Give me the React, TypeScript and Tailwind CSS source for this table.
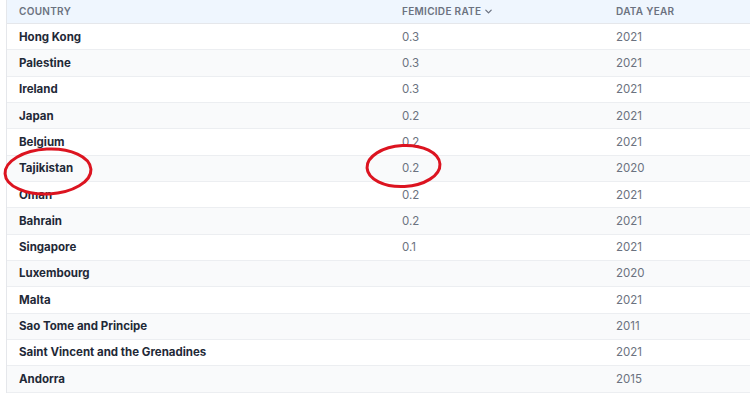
import React from "react";

const rows: [string, string, string][] = [
  ["Hong Kong", "0.3", "2021"],
  ["Palestine", "0.3", "2021"],
  ["Ireland", "0.3", "2021"],
  ["Japan", "0.2", "2021"],
  ["Belgium", "0.2", "2021"],
  ["Tajikistan", "0.2", "2020"],
  ["Oman", "0.2", "2021"],
  ["Bahrain", "0.2", "2021"],
  ["Singapore", "0.1", "2021"],
  ["Luxembourg", "", "2020"],
  ["Malta", "", "2021"],
  ["Sao Tome and Principe", "", "2011"],
  ["Saint Vincent and the Grenadines", "", "2021"],
  ["Andorra", "", "2015"],
];

export default function App() {
  return (
    <div
      className="relative w-[750px] h-[395px] overflow-hidden bg-white"
      style={{ fontFamily: "Inter, 'Noto Sans', sans-serif" }}
    >
      <div className="ml-[6px] w-[800px] border-l border-[#e5e7eb]">
        <div className="grid grid-cols-[383px_214px_1fr] h-[24px] items-center bg-[#eff6fe] border-b border-[#e5e7eb] text-[10px] font-semibold tracking-[0.03em] text-[#6b7280] uppercase">
          <div className="pl-[12px]">Country</div>
          <div className="pl-[12px] flex items-center gap-[3px]">
            Femicide Rate
            <svg width="9" height="9" viewBox="0 0 10 10" fill="none" stroke="#6b7280" strokeWidth="1.4" strokeLinecap="round" strokeLinejoin="round">
              <path d="M2 3.5 L5 6.5 L8 3.5" />
            </svg>
          </div>
          <div className="pl-[12px]">Data Year</div>
        </div>
        {rows.map((r, i) => (
          <div
            key={r[0]}
            className={
              "grid grid-cols-[383px_214px_1fr] h-[26.33px] items-center border-b border-[#eceef1] text-[11.5px] " +
              (i % 2 === 1 ? "bg-[#f9fafb]" : "bg-white")
            }
          >
            <div className="pl-[12px] pt-[1px] font-bold text-[#1f2937]">{r[0]}</div>
            <div className="pl-[12px] pt-[1px] text-[#6b7280]">{r[1]}</div>
            <div className="pl-[12px] pt-[1px] text-[#6b7280]">{r[2]}</div>
          </div>
        ))}
      </div>
      <svg
        className="absolute left-0 top-0 pointer-events-none"
        width="750"
        height="395"
        viewBox="0 0 750 395"
        fill="none"
      >
        <ellipse cx="48" cy="171.5" rx="43" ry="22.5" stroke="#dc1420" strokeWidth="3" transform="rotate(-3 48 171.5)" />
        <ellipse cx="403.5" cy="166" rx="36.5" ry="20.5" stroke="#dc1420" strokeWidth="3" transform="rotate(-3 403.5 166)" />
      </svg>
    </div>
  );
}
